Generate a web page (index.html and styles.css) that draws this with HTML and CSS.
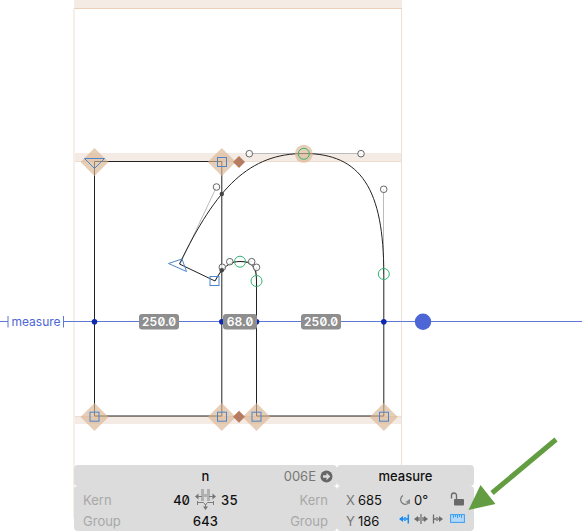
FILE: index.html
```html
<!DOCTYPE html>
<html lang="en">
<head>
<meta charset="utf-8">
<title>n</title>
<link rel="stylesheet" href="styles.css">
</head>
<body>
<main class="editor">
  <svg class="canvas" aria-label="Glyph canvas">
    <defs>
      <path id="zone" d="M0-14 14 0 0 14-14 0Z"/>
      <path id="kink" d="M0-6 6 0 0 6-6 0Z"/>
      <rect id="corner" x="-4.500" y="-4.500" width="9" height="9"/>
    </defs>
    <g class="band">
      <path d="M74 0H402V8H74ZM74 153H402V162H74ZM74 416H402V424H74Z"/>
    </g>
    <path class="metric-top" d="M74 8.500H402"/>
    <path class="metric" d="M74 161.500H402M74 416.500H402"/>
    <path class="bearing-left" d="M74 9V518"/>
    <path class="bearing-right" d="M401.500 9V466"/>

    <g class="handle-line">
      <path d="M180 264 216.500 187M249.500 153.500H361M383.500 189V274M222.500 267 215 281M230 261.500H252M256.500 267V281"/>
    </g>
    <g class="outline">
      <path d="M94.500 161.500H221.800V416H94.500Z"/>
      <path d="M256.500 416V281C256.500 267 252 261.500 240 261.500C230 261.500 222.500 267 215 281L179.500 264C216.500 187 249.500 153.500 304 153.500C361 153.500 383.800 189 383.800 274V416Z"/>
    </g>
    <g class="zones">
      <use href="#zone" x="94.500" y="162"/><use href="#zone" x="221.800" y="162"/>
      <use href="#zone" x="94.500" y="417"/><use href="#zone" x="221.800" y="417"/>
      <use href="#zone" x="256.500" y="417"/><use href="#zone" x="383.800" y="417"/>
      <circle cx="303.800" cy="153.800" r="9"/>
    </g>
    <g class="kinks"><use href="#kink" x="239" y="162"/><use href="#kink" x="239" y="416.700"/></g>
    <g class="corners">
      <use href="#corner" x="222" y="162"/><use href="#corner" x="94.500" y="416.700"/>
      <use href="#corner" x="222" y="416.700"/><use href="#corner" x="256.500" y="416.700"/>
      <use href="#corner" x="384" y="416.700"/><use href="#corner" x="214.500" y="281"/>
      <path d="M84.500 158.500H104.500L94.500 168.500ZM168.500 263.500 182 259 186.500 271.500Z"/>
    </g>
    <g class="smooth">
      <circle cx="303.800" cy="153.800" r="5.500"/><circle cx="383.800" cy="274" r="5.500"/>
      <circle cx="240" cy="261.700" r="5.500"/><circle cx="256.500" cy="281" r="5.500"/>
    </g>
    <g class="handles">
      <circle cx="216.500" cy="187" r="3.300"/><circle cx="249.300" cy="153.700" r="3.300"/>
      <circle cx="361" cy="153.700" r="3.300"/><circle cx="383.700" cy="189.300" r="3.300"/>
      <circle cx="222.300" cy="267.300" r="3.300"/><circle cx="229.800" cy="261.700" r="3.300"/>
      <circle cx="251.700" cy="261.700" r="3.300"/><circle cx="256.500" cy="267.300" r="3.300"/>
    </g>
    <g class="crossings"><circle cx="221.800" cy="194" r="2.200"/><circle cx="221.800" cy="270.300" r="2.200"/></g>

    <path class="guide" d="M0 321H8V322H0Z"/>
    <rect class="guide" x="64" y="321" width="100%" height="1"/>
    <path class="guide-end" d="M8 316V327.500M63.500 316V327.500"/>
    <text class="guide-name" x="36" y="326">measure</text>
    <g class="hits">
      <circle cx="94.500" cy="321.800" r="2.800"/><circle cx="221.800" cy="321.800" r="2.800"/>
      <circle cx="256.500" cy="321.800" r="2.800"/><circle cx="383.800" cy="321.800" r="2.800"/>
    </g>
    <circle class="knob" cx="423" cy="321.700" r="8.200"/>
    <g class="tag">
      <rect x="139" y="314" width="40" height="15.500" rx="3"/><text x="159" y="326">250.0</text>
      <rect x="223" y="314" width="34" height="15.500" rx="3"/><text x="240" y="326">68.0</text>
      <rect x="301" y="314" width="40" height="15.500" rx="3"/><text x="321" y="326">250.0</text>
    </g>
  </svg>

  <section class="panels">
    <div class="glyph-panel">
      <header class="block head glyph-head">
        <strong class="name">n</strong>
        <span class="unicode">006E
          <button class="icon" aria-label="Show glyph info"><svg width="13" height="13" viewBox="0 0 13 13"><circle cx="6.500" cy="6.500" r="6" fill="#666"/><path d="M3 5.200H6.500V2.800L10.300 6.500 6.500 10.200V7.800H3Z" fill="#dcdcdc"/></svg></button>
        </span>
      </header>
      <div class="block body">
        <div class="row kern-row">
          <span class="dim">Kern</span>
          <div class="sides">
            <input class="field end" aria-label="Left sidebearing" value="40">
            <svg width="21" height="21" viewBox="0 0 21 21"><path d="M6 0H9V5H12V0H15V12H12V8H9V12H6Z" fill="#b0b0b0"/><path d="M2 7.500H7M14 7.500H19M2.500 12V16M18.500 12V16M2.500 13.500H8.500L10.500 16 12.500 13.500H18.500M10.500 15V18" fill="none" stroke="#7c7c7c"/><path d="M0 7.500 3.500 4.500V10.500ZM21 7.500 17.500 4.500V10.500ZM10.500 21 8 17.500H13Z" fill="#747474"/></svg>
            <input class="field" aria-label="Right sidebearing" value="35">
          </div>
          <span class="dim right">Kern</span>
        </div>
        <div class="row group-row">
          <span class="dim">Group</span>
          <input class="field mid" aria-label="Width" value="643">
          <span class="dim right">Group</span>
        </div>
      </div>
    </div>

    <div class="guide-panel">
      <header class="block head"><strong class="name">measure</strong></header>
      <div class="block body">
        <div class="row guide-row">
          <label class="axis" for="gx">X</label>
          <input class="field plain" id="gx" value="685">
          <label class="angle"><svg width="12" height="12" viewBox="0 0 12 12" role="img" aria-label="Angle"><path d="M4 1.500A4.700 4.700 0 1 0 10 8.500" fill="none" stroke="#777" stroke-width="1.200"/><path d="M11 5V10L6.500 8Z" fill="#888"/></svg><input class="field plain" value="0°"></label>
          <button class="icon last" aria-label="Lock guide"><svg width="15" height="15" viewBox="0 0 15 15"><rect x="4" y="7" width="10" height="6.500" rx="1" fill="#696969"/><path d="M1.500 6.500V3.500A2.500 2.500 0 0 1 6.500 3.500V7.500" fill="none" stroke="#696969" stroke-width="1.300"/></svg></button>
        </div>
        <div class="row guide-row tools">
          <label class="axis" for="gy">Y</label>
          <input class="field plain" id="gy" value="186">
          <span class="aligns">
            <button class="icon" aria-label="Left"><svg width="11" height="10" viewBox="0 0 11 10"><path d="M0 5 4 2V8Z" fill="#168bf2"/><path d="M3 5H5M6 3V7M7 5H9M9.300 .5V9.500" stroke="#168bf2" stroke-width="1.500"/></svg></button>
            <button class="icon" aria-label="Center"><svg width="14" height="10" viewBox="0 0 14 10"><path d="M0 5 4 2V8ZM14 5 10 2V8Z" fill="#6d6d6d"/><path d="M2 5H5M9 5H12M7 0V10M5 3V7M9 3V7" stroke="#6d6d6d" stroke-width="1.200"/></svg></button>
            <button class="icon" aria-label="Right"><svg width="11" height="10" viewBox="0 0 11 10"><path d="M11 5 7 2V8Z" fill="#6d6d6d"/><path d="M1.500 .5V9.500M1.500 5H4M6 5H8M5 3V7" stroke="#6d6d6d" stroke-width="1.300"/></svg></button>
          </span>
          <button class="icon last" aria-label="Show measurement"><svg width="15" height="9" viewBox="0 0 15 9"><rect x=".6" y=".6" width="13.800" height="7.800" fill="#b4d8f8" stroke="#3b9df4"/><path d="M3.500 1V4M5.500 1V3M7.500 1V4M9.500 1V3M11.500 1V4" stroke="#3b9df4"/></svg></button>
        </div>
      </div>
    </div>
  </section>

  <svg class="pointer" width="90" height="74" viewBox="0 0 90 74" aria-hidden="true"><path d="M88 2.500 24 56" stroke="#649c42" stroke-width="5"/><path d="M.5 73 12.500 48 27.500 67Z" fill="#649c42"/></svg>
</main>
</body>
</html>
```
FILE: styles.css
```css
* { box-sizing: border-box; }

body {
  margin: 0;
  background: #fff;
  font: 13px/20px Inter, "Liberation Sans", sans-serif;
  color: #111;
}

.editor {
  position: relative;
  display: grid;
  min-height: 100vh;
  overflow: hidden;
}

.canvas, .panels { grid-area: 1 / 1; }

.canvas {
  width: 100%;
  height: 100%;
  min-height: 531px;
}

.band { fill: #f5ebe5; }
.metric-top { stroke: #ebcfb7; }
.metric { stroke: #f0dccd; }
.bearing-left { stroke: #f6efe8; stroke-width: 2px; }
.bearing-right { stroke: #eee0d8; }
.handle-line { fill: none; stroke: #bbb; }
.outline { fill: none; stroke: #222; stroke-width: 1px; }
.zones { fill: #d8b490; fill-opacity: 0.65; }
.kinks { fill: #b67c62; }
.corners { fill: none; stroke: #4b86cc; }
.smooth { fill: none; stroke: #35b573; }
.handles { fill: #fff; fill-opacity: 0.7; stroke: #666; }
.crossings { fill: #444; }
.guide { fill: #5f78d4; }
.guide-end { stroke: #5f78d4; }
.guide-name { fill: #4c66d6; font-size: 12px; text-anchor: middle; }
.hits { fill: #0f28b0; }
.knob { fill: #4c66d6; }
.tag rect { fill: #8e8e8e; }
.tag text {
  fill: #fff;
  font-size: 12px;
  font-weight: 600;
  font-feature-settings: "zero", "tnum";
  text-anchor: middle;
}

.panels {
  align-self: end;
  display: grid;
  grid-template-columns: 263px 137px;
  margin-left: 74px;
}

.block {
  background: #dcdcdc;
  border-radius: 4px;
}

.head {
  display: grid;
  height: 21px;
  padding: 1px 4px 0;
  text-align: center;
}

.name { font-weight: 500; grid-area: 1 / 1; }

.unicode {
  grid-area: 1 / 1;
  justify-self: end;
  display: flex;
  align-items: center;
  gap: 4px;
  color: #777;
}

.body {
  height: 45px;
  padding: 3px 9px 0;
}

.row {
  display: grid;
  align-items: center;
  height: 21px;
}

.kern-row, .group-row { grid-template-columns: 1fr 100px 1fr; }

.dim { color: #a8a8a8; }
.right { text-align: right; }

.sides {
  display: flex;
  align-items: center;
  justify-content: center;
  gap: 5px;
}

.field {
  width: 26px;
  height: 20px;
  padding: 0;
  border: 0;
  background: transparent;
  color: #111;
  font: inherit;
  font-weight: 500;
  font-feature-settings: "zero", "tnum";
}

.end { text-align: right; }
.mid { width: 100%; text-align: center; }
.plain { font-weight: 400; font-feature-settings: normal; }

.guide-row { grid-template-columns: 12px 41px 1fr 15px; }
.axis { color: #777; }
.angle, .aligns { display: flex; align-items: center; }
.angle { gap: 3px; }
.aligns { gap: 4px; }
.tools .icon { padding-bottom: 4px; }

.icon {
  display: flex;
  padding: 0;
  border: 0;
  background: none;
}

.pointer {
  position: absolute;
  left: 468px;
  bottom: 20px;
}
```
